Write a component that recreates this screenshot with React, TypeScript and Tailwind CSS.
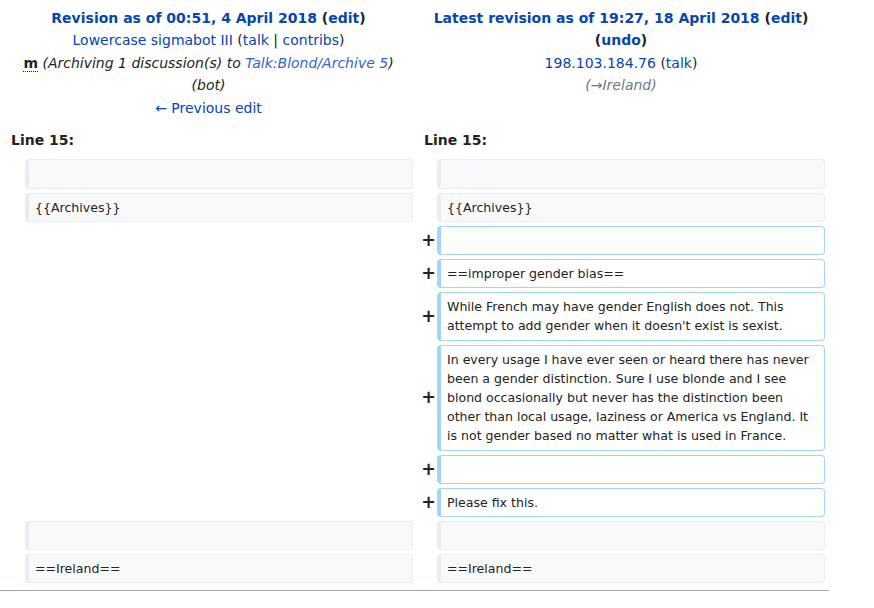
const link = "text-[#0645ad]";

function Context({ text }: { text?: string }) {
  return (
    <>
      <td className="w-[17px]"></td>
      <td className="align-top bg-[#f8f9fa] border border-[#eaecf0] border-l-4 rounded-[4px] text-[12.55px] leading-[19.2px] py-[4px] px-[6px] text-[#222]">
        <div className="whitespace-pre-wrap">{text ?? "\u00a0"}</div>
      </td>
    </>
  );
}

function Added({ text }: { text?: string }) {
  return (
    <>
      <td className="w-[16px] text-right align-middle font-bold text-[17.5px] leading-[1.2] text-[#222]">
        <span className="inline-block -mr-[3px]">+</span>
      </td>
      <td className="align-top bg-white border border-[#a3d3ff] border-l-4 rounded-[4px] text-[12.55px] leading-[19.2px] py-[4px] px-[6px] text-[#222]">
        <div className="whitespace-pre-wrap">{text ?? "\u00a0"}</div>
      </td>
    </>
  );
}

function Blank() {
  return (
    <>
      <td></td>
      <td></td>
    </>
  );
}

export default function App() {
  return (
    <div className="bg-white w-[874px] h-[608px] font-['DejaVu_Sans',sans-serif] text-[#222] text-[14px]">
      <table className="w-[829px] border-separate border-spacing-1 table-fixed">
        <colgroup>
          <col className="w-[17px]" />
          <col className="w-[388px]" />
          <col className="w-[16px]" />
          <col className="w-[388px]" />
        </colgroup>
        <tbody>
          <tr className="align-top">
            <td colSpan={2} className="text-center leading-[22.4px] pt-[3px] px-[8px]">
              <div className="font-bold">
                <span className={link}>Revision as of 00:51, 4 April 2018</span> (<span className={link}>edit</span>)
              </div>
              <div>
                <span className={link}>Lowercase sigmabot III</span> (<span className={link}>talk</span> | <span className={link}>contribs</span>)
              </div>
              <div>
                <abbr className="font-bold no-underline border-b border-dotted border-[#222]">m</abbr>{" "}
                <span className="italic">
                  (Archiving 1 discussion(s) to <span className="text-[#3366cc]">Talk:Blond/Archive 5</span>)
                </span>
              </div>
              <div className="italic">(bot)</div>
              <div>
                <span className={link}>← Previous edit</span>
              </div>
            </td>
            <td colSpan={2} className="text-center leading-[22.4px] pt-[3px] px-[8px]">
              <div className="font-bold">
                <span className={link}>Latest revision as of 19:27, 18 April 2018</span> (<span className={link}>edit</span>)
                <br />(<span className={link}>undo</span>)
              </div>
              <div>
                <span className={link}>198.103.184.76</span> (<span className={link}>talk</span>)
              </div>
              <div className="italic text-[#72777d]">(→Ireland)</div>
            </td>
          </tr>
          <tr>
            <td colSpan={2} className="font-bold leading-[22.4px] pl-[7px] pt-[6px] pb-[4px]">Line 15:</td>
            <td colSpan={2} className="font-bold leading-[22.4px] pl-[7px] pt-[6px] pb-[4px]">Line 15:</td>
          </tr>
          <tr>
            <Context />
            <Context />
          </tr>
          <tr>
            <Context text="{{Archives}}" />
            <Context text="{{Archives}}" />
          </tr>
          <tr>
            <Blank />
            <Added />
          </tr>
          <tr>
            <Blank />
            <Added text="==improper gender bias==" />
          </tr>
          <tr>
            <Blank />
            <Added text="While French may have gender English does not. This attempt to add gender when it doesn't exist is sexist." />
          </tr>
          <tr>
            <Blank />
            <Added text="In every usage I have ever seen or heard there has never been a gender distinction. Sure I use blonde and I see blond occasionally but never has the distinction been other than local usage, laziness or America vs England. It is not gender based no matter what is used in France." />
          </tr>
          <tr>
            <Blank />
            <Added />
          </tr>
          <tr>
            <Blank />
            <Added text="Please fix this." />
          </tr>
          <tr>
            <Context />
            <Context />
          </tr>
          <tr>
            <Context text="==Ireland==" />
            <Context text="==Ireland==" />
          </tr>
        </tbody>
      </table>
      <div className="w-[829px] h-px bg-[#a2a9b1] mt-[3px]"></div>
    </div>
  );
}
